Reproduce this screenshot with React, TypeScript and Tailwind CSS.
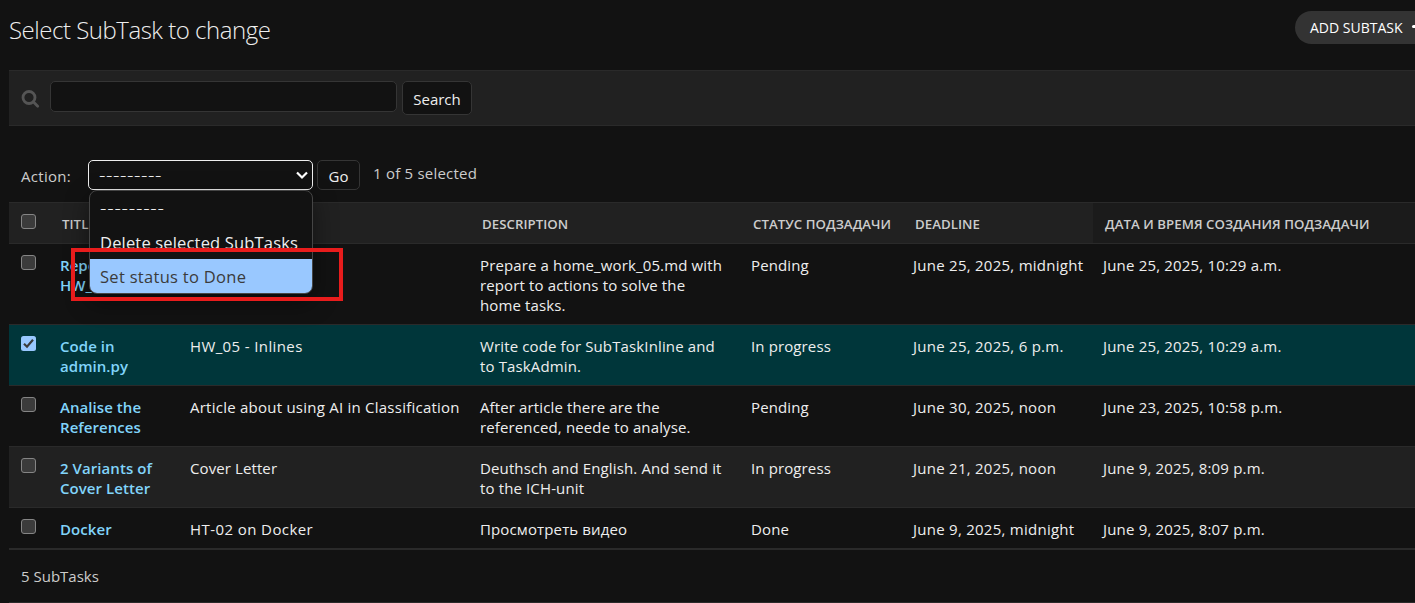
import type { ReactNode } from "react";

type Row = {
  title: string[];
  task: string;
  taskTracking?: string;
  description: string[];
  status: string;
  deadline: string;
  created: string;
  checked?: boolean;
  tone: string;
};

const COLS = "grid grid-cols-[41px_130px_290px_271px_162px_190px_322px]";

const rows: Row[] = [
  {
    title: ["Report", "HW_05"],
    task: "",
    description: ["Prepare a home_work_05.md with", "report to actions to solve the", "home tasks."],
    status: "Pending",
    deadline: "June 25, 2025, midnight",
    created: "June 25, 2025, 10:29 a.m.",
    tone: "h-[81px] bg-[#121212]",
  },
  {
    title: ["Code in", "admin.py"],
    task: "HW_05 - Inlines",
    taskTracking: "tracking-[0.38px]",
    description: ["Write code for SubTaskInline and", "to TaskAdmin."],
    status: "In progress",
    deadline: "June 25, 2025, 6 p.m.",
    created: "June 25, 2025, 10:29 a.m.",
    checked: true,
    tone: "h-[61px] bg-[#00363a]",
  },
  {
    title: ["Analise the", "References"],
    task: "Article about using AI in Classification",
    description: ["After article there are the", "referenced, neede to analyse."],
    status: "Pending",
    deadline: "June 30, 2025, noon",
    created: "June 23, 2025, 10:58 p.m.",
    tone: "h-[61px] bg-[#121212]",
  },
  {
    title: ["2 Variants of", "Cover Letter"],
    task: "Cover Letter",
    taskTracking: "tracking-[0.1px]",
    description: ["Deuthsch and English. And send it", "to the ICH-unit"],
    status: "In progress",
    deadline: "June 21, 2025, noon",
    created: "June 9, 2025, 8:09 p.m.",
    tone: "h-[61px] bg-[#212121]",
  },
  {
    title: ["Docker"],
    task: "HT-02 on Docker",
    taskTracking: "tracking-[0.42px]",
    description: ["Просмотреть видео"],
    status: "Done",
    deadline: "June 9, 2025, midnight",
    created: "June 9, 2025, 8:07 p.m.",
    tone: "h-[41px] bg-[#121212]",
  },
];

function Checkbox({ checked = false }: { checked?: boolean }) {
  return checked ? (
    <span className="flex size-[15px] rounded-[2.5px] bg-[#99c8ff]">
      <svg viewBox="0 0 15 15" className="size-[15px]" fill="none" stroke="#3b3b3b" strokeWidth="2.2">
        <path d="M3 7.8 6 10.7 12 3.7" />
      </svg>
    </span>
  ) : (
    <span className="block size-[15px] rounded-[3px] border border-[#858585] bg-[#3b3b3b]" />
  );
}

function Cell({ children, className = "" }: { children?: ReactNode; className?: string }) {
  return <div className={`pl-[10px] pt-[11px] whitespace-nowrap leading-5 ${className}`}>{children}</div>;
}

function HeadCell({ children, className = "" }: { children?: ReactNode; className?: string }) {
  return (
    <div className={`flex h-[40px] items-center pt-[3px] pl-3 text-[13.25px] font-semibold tracking-[0.04px] whitespace-nowrap text-[#cccccc] ${className}`}>
      {children}
    </div>
  );
}

export default function App() {
  return (
    <div className="h-[603px] w-full overflow-hidden bg-[#121212] pl-[9px] font-['Open_Sans','Noto_Sans',sans-serif] text-[15px] text-[#eeeeee]">
      <header className="flex h-[70px] justify-between">
        <h1 className="pt-[14px] text-[24px] leading-8 font-light tracking-[-0.48px] whitespace-nowrap">Select SubTask to change</h1>
        <a className="mt-[11px] flex h-[33px] w-[120px] items-center overflow-hidden rounded-l-full bg-[#333333] pl-[15px] text-[14px] whitespace-nowrap text-white">
          <span className="w-[102px] shrink-0">ADD SUBTASK</span>
          <span className="-mt-[3px] h-[3px] w-[9px] shrink-0 rounded-full bg-white" />
        </a>
      </header>

      <form className="flex h-[56px] items-start border-y border-[#2a2a2a] bg-[#212121] pt-[10px] pl-[12px]">
        <svg viewBox="0 0 19 19" className="mt-[9px] size-[19px]" fill="none" stroke="#555555">
          <circle cx="8" cy="7.5" r="6" strokeWidth="2.8" />
          <path d="m12.3 11.8 4.4 4.4" strokeWidth="2.8" strokeLinecap="round" />
        </svg>
        <input className="ml-[10px] h-[31px] w-[347px] rounded-[5px] border border-[#353535] bg-[#121212]" />
        <button type="button" className="ml-[5px] h-[34px] w-[70px] rounded-[5px] border border-[#353535] bg-[#121212] pt-[2px]">Search</button>
      </form>

      <div className="flex h-[76px] items-start pt-[34px] pl-[12px] whitespace-nowrap">
        <span className="w-[67px] pt-[6px] leading-5 tracking-[0.3px] text-[#cccccc]">Action:</span>
        <div className="relative">
          <div className="flex h-[30px] w-[225px] items-center justify-between rounded-[5px] border border-[#eeeeee] bg-[#121212] pr-[4px] pl-[10px]">
            <span className="text-[20px] leading-5 font-light tracking-[0.56px]">---------</span>
            <svg viewBox="0 0 12 12" className="size-[12px]" fill="none" stroke="#ffffff" strokeWidth="2.2">
              <path d="m1 3.5 5 5 5-5" />
            </svg>
          </div>
          <div className="absolute top-[30px] left-px z-10 h-[104px] w-[224px] overflow-hidden rounded-[8px] border border-[#454545] bg-[#121212] text-[16.5px] shadow-[0_8px_24px_rgba(0,0,0,0.45)]">
            <div className="flex h-[34px] items-center pl-[10px] text-[20px] font-light tracking-[0.76px]">---------</div>
            <div className="flex h-[34px] items-center pt-[2px] pl-[10px] tracking-[0.17px]">Delete selected SubTasks</div>
            <div className="flex h-[35px] items-center bg-[#99c8ff] pt-px pl-[10px] tracking-[0.3px] text-[#3b3b3b]">Set status to Done</div>
          </div>
          <div className="absolute top-[88px] left-[-17px] z-20 h-[53px] w-[272px] border-4 border-[#e81c1c]" />
        </div>
        <button type="button" className="ml-[4px] h-[30px] w-[43px] rounded-[5px] border border-[#353535] bg-[#121212] pt-[2px]">Go</button>
        <span className="ml-[13px] pt-[3px] leading-5 tracking-[0.22px] text-[#cccccc]">1 of 5 selected</span>
      </div>

      <section className="w-[1406px]">
        <div className={`${COLS} h-[42px] border-y border-[#2a2a2a] bg-[#212121]`}>
          <div className="pt-[11px] pl-[12px]"><Checkbox /></div>
          <HeadCell>TITLE</HeadCell>
          <HeadCell />
          <HeadCell>DESCRIPTION</HeadCell>
          <HeadCell>СТАТУС ПОДЗАДАЧИ</HeadCell>
          <HeadCell>DEADLINE</HeadCell>
          <HeadCell className="bg-[#1b1b1b]">ДАТА И ВРЕМЯ СОЗДАНИЯ ПОДЗАДАЧИ</HeadCell>
        </div>
        {rows.map((row) => (
          <div key={row.title[0]} className={`${COLS} border-b border-[#2a2a2a] ${row.tone}`}>
            <div className="pt-[11px] pl-[12px]"><Checkbox checked={row.checked} /></div>
            <Cell className="font-semibold tracking-[0.06px] text-[#81d4fa]">
              {row.title.map((line) => <div key={line}>{line}</div>)}
            </Cell>
            <Cell className={row.taskTracking ?? "tracking-[0.24px]"}>{row.task}</Cell>
            <Cell className="tracking-[0.13px]">{row.description.map((line) => <div key={line}>{line}</div>)}</Cell>
            <Cell className="tracking-[0.12px]">{row.status}</Cell>
            <Cell className="tracking-[0.26px]">{row.deadline}</Cell>
            <Cell className="tracking-[0.18px]">{row.created}</Cell>
          </div>
        ))}
      </section>
      <footer className="flex h-[54px] items-center border-y border-[#2a2a2a] pl-[12px] text-[#cccccc]">5 SubTasks</footer>
    </div>
  );
}
